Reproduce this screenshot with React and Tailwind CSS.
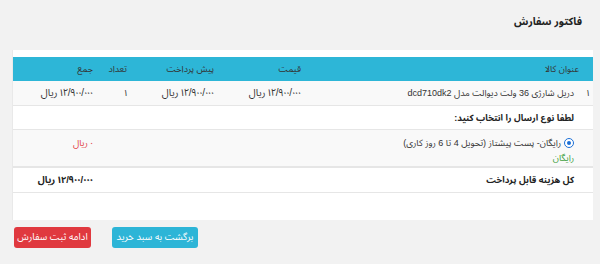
export default function App() {
  const money = "۱۲/۹۰۰/۰۰۰ ریال";
  const cell = "flex items-center pr-2";
  return (
    <div dir="rtl" className="w-[600px] h-[264px] bg-[#f2f2f2] text-[#333] overflow-hidden font-[family-name:Liberation_Sans,Noto_Sans_Arabic_UI,sans-serif]">
      <div className="h-[50px] pr-[18px] pt-[12px]">
        <h1 className="text-[10.5px] font-bold leading-[18px] text-[#222]">فاکتور سفارش</h1>
      </div>
      <div className="ml-[12px] mr-[7px] w-[581px] h-[170px] bg-white pt-[7px] border-l border-[#e9e9e9]">
        <div className="grid grid-cols-[11px_273px_87px_87px_34px_88px] text-[9px] leading-[14px]">
          {/* header */}
          <div className="col-span-2 h-[24px] bg-[#2db6d7] flex items-center pr-[14px]">عنوان کالا</div>
          <div className={`h-[24px] bg-[#2db6d7] ${cell}`}>قیمت</div>
          <div className={`h-[24px] bg-[#2db6d7] ${cell}`}>پیش پرداخت</div>
          <div className={`h-[24px] bg-[#2db6d7] ${cell}`}>تعداد</div>
          <div className={`h-[24px] bg-[#2db6d7] ${cell}`}>جمع</div>
          {/* row 1 */}
          <div className="h-[25px] bg-[#f9f9f9] border-b border-[#e6e6e6] flex items-center justify-center pl-[1px]">۱</div>
          <div className={`h-[25px] bg-[#f9f9f9] border-b border-[#e6e6e6] ${cell}`}>دریل شارژی 36 ولت دیوالت مدل dcd710dk2</div>
          <div className={`h-[25px] bg-[#f9f9f9] border-b border-[#e6e6e6] ${cell} text-[10px]`}>{money}</div>
          <div className={`h-[25px] bg-[#f9f9f9] border-b border-[#e6e6e6] ${cell} text-[10px]`}>{money}</div>
          <div className={`h-[25px] bg-[#f9f9f9] border-b border-[#e6e6e6] ${cell}`}>۱</div>
          <div className={`h-[25px] bg-[#f9f9f9] border-b border-[#e6e6e6] ${cell} text-[10px]`}>{money}</div>
          {/* row 2 */}
          <div className="h-[24px] border-b border-[#e6e6e6]"></div>
          <div className={`col-span-5 h-[24px] border-b border-[#e6e6e6] ${cell} font-bold text-[#222]`}>لطفا نوع ارسال را انتخاب کنید:</div>
          {/* row 3 */}
          <div className="h-[38px] bg-[#f9f9f9] border-b-2 border-[#e6e6e6]"></div>
          <div className="col-span-4 h-[38px] bg-[#f9f9f9] border-b-2 border-[#e6e6e6] pr-2 pt-[6px] flex flex-col">
            <div className="flex items-center gap-[3px] leading-[14px]">
              <span className="w-[10px] h-[10px] rounded-full border-[1.5px] border-[#1b6fd6] flex items-center justify-center bg-white shrink-0">
                <span className="w-[4px] h-[4px] rounded-full bg-[#1b6fd6]"></span>
              </span>
              <span>رایگان- پست پیشتاز (تحویل 4 تا 6 روز کاری)</span>
            </div>
            <div className="text-[#3c9f3c] leading-[14px] mt-px">رایگان</div>
          </div>
          <div className="h-[38px] bg-[#f9f9f9] border-b-2 border-[#e6e6e6] pr-2 pt-[6px] leading-[14px] text-[#e2403f]">۰ ریال</div>
          {/* row 4 */}
          <div className="h-[25px] border-b border-[#e6e6e6]"></div>
          <div className={`col-span-4 h-[25px] border-b border-[#e6e6e6] ${cell} font-bold text-[#222]`}>کل هزینه قابل پرداخت</div>
          <div className={`h-[25px] border-b border-[#e6e6e6] ${cell} font-bold text-[9.5px] text-[#222]`}>{money}</div>
        </div>
      </div>
      <div dir="ltr" className="flex gap-[21px] pl-[14px] pt-[7px]">
        <button dir="rtl" className="w-[77px] h-[21px] rounded-[3px] bg-[#e0393f] text-white text-[9.5px] flex items-center justify-center">ادامه ثبت سفارش</button>
        <button dir="rtl" className="w-[86px] h-[21px] rounded-[3px] bg-[#2db5d7] text-white text-[9.5px] flex items-center justify-center">برگشت به سبد خرید</button>
      </div>
    </div>
  );
}
